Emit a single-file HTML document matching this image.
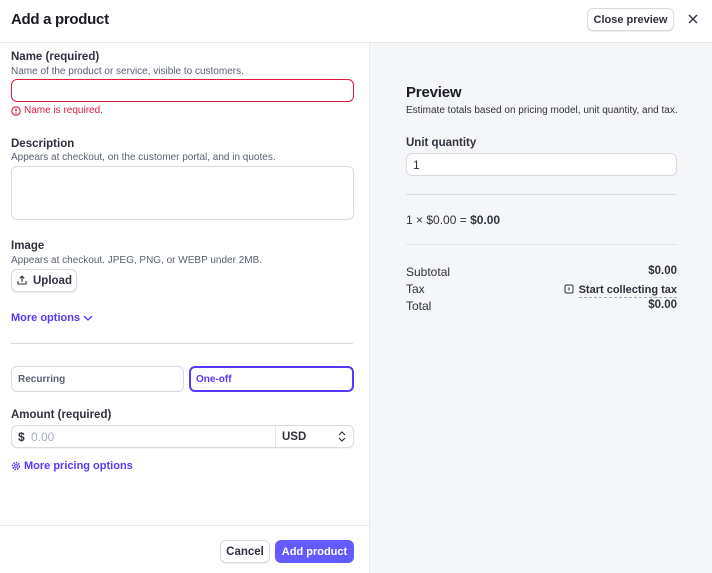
<!DOCTYPE html>
<html><head><style>
*{box-sizing:border-box;margin:0;padding:0}
body{width:712px;height:573px;overflow:hidden;background:#fff;font-family:"Liberation Sans",sans-serif;color:#1a1b25;position:relative}
.a{position:absolute;white-space:nowrap}
.lbl{font-size:11.5px;font-weight:bold;color:#30313d}
.help{font-size:10px;color:#596171}
.box{position:absolute;border:1px solid #d8dbe2;border-radius:6px;background:#fff}
.purple{color:#533afd}
</style></head><body>
<div class="a" style="left:11px;top:11px;font-size:15px;font-weight:bold;letter-spacing:-0.3px">Add a product</div>
<div class="box" style="left:587px;top:8px;width:87px;height:23px;font-size:11px;font-weight:bold;color:#30313d;text-align:center;line-height:22px;box-shadow:0 1px 1px rgba(0,0,0,.08)">Close preview</div>
<svg class="a" style="left:688px;top:14px" width="10" height="10" viewBox="0 0 10 10"><path d="M1 1L9 9M9 1L1 9" stroke="#30313d" stroke-width="1.3"/></svg>
<div class="a" style="left:0;top:42px;width:712px;height:1px;background:#e6e8ec"></div>
<div class="a" style="left:369px;top:43px;width:343px;height:530px;background:#f5f6f8;border-left:1px solid #e6e8ec"></div>

<div class="a lbl" style="left:11px;top:51px">Name (required)</div>
<div class="a help" style="left:11px;top:66px">Name of the product or service, visible to customers.</div>
<div class="box" style="left:11px;top:79px;width:343px;height:23px;border-color:#df1b41"></div>
<svg class="a" style="left:11px;top:106px" width="10" height="10" viewBox="0 0 10 10"><circle cx="5" cy="5" r="4.2" fill="none" stroke="#df1b41" stroke-width="1.1"/><path d="M5 2.6V5.6" stroke="#df1b41" stroke-width="1.2"/><circle cx="5" cy="7.3" r=".7" fill="#df1b41"/></svg>
<div class="a" style="left:24px;top:105px;font-size:10px;color:#df1b41">Name is required.</div>

<div class="a lbl" style="left:11px;top:138px">Description</div>
<div class="a help" style="left:11px;top:152px">Appears at checkout, on the customer portal, and in quotes.</div>
<div class="box" style="left:11px;top:166px;width:343px;height:54px"></div>

<div class="a lbl" style="left:11px;top:240px">Image</div>
<div class="a help" style="left:11px;top:255px">Appears at checkout. JPEG, PNG, or WEBP under 2MB.</div>
<div class="box" style="left:11px;top:269px;width:66px;height:23px;box-shadow:0 1px 1px rgba(0,0,0,.08)"></div>
<svg class="a" style="left:17px;top:275px" width="10" height="10" viewBox="0 0 10 10"><path d="M5 7V1.2M2.8 3.3L5 1.1 7.2 3.3M1 6v3h8V6" fill="none" stroke="#30313d" stroke-width="1.1"/></svg>
<div class="a" style="left:33px;top:275px;font-size:11.5px;font-weight:bold;color:#30313d">Upload</div>

<div class="a purple" style="left:11px;top:312px;font-size:11px;font-weight:bold">More options</div>
<svg class="a" style="left:83px;top:314px" width="10" height="8" viewBox="0 0 10 8"><path d="M1 2L5 6 9 2" fill="none" stroke="#533afd" stroke-width="1.3"/></svg>
<div class="a" style="left:11px;top:343px;width:342px;height:1px;background:#d8dbe2"></div>

<div class="box" style="left:11px;top:366px;width:173px;height:26px"></div>
<div class="a" style="left:18px;top:374px;font-size:10px;font-weight:bold;color:#596171">Recurring</div>
<div class="box" style="left:189px;top:366px;width:165px;height:26px;border:2px solid #533afd"></div>
<div class="a purple" style="left:196px;top:374px;font-size:10px;font-weight:bold">One-off</div>

<div class="a lbl" style="left:11px;top:409px">Amount (required)</div>
<div class="box" style="left:11px;top:425px;width:343px;height:23px;box-shadow:0 1px 1px rgba(0,0,0,.05)"></div>
<div class="a" style="left:275px;top:426px;width:1px;height:21px;background:#e6e8ec"></div>
<div class="a" style="left:18px;top:430px;font-size:12px;font-weight:bold;color:#30313d">$</div>
<div class="a" style="left:31px;top:430px;font-size:12px;color:#a3acba">0.00</div>
<div class="a" style="left:282px;top:431px;font-size:11.5px;font-weight:bold;color:#30313d">USD</div>
<svg class="a" style="left:338px;top:431px" width="8" height="11" viewBox="0 0 8 11"><path d="M1 4L4 1 7 4M1 7L4 10 7 7" fill="none" stroke="#30313d" stroke-width="1.2"/></svg>

<svg class="a" style="left:11px;top:461px" width="10" height="10" viewBox="0 0 10 10"><circle cx="5" cy="5" r="3.4" fill="none" stroke="#533afd" stroke-width="1.6" stroke-dasharray="1.6 1"/><circle cx="5" cy="5" r="1.4" fill="none" stroke="#533afd" stroke-width="1"/></svg>
<div class="a purple" style="left:24px;top:460px;font-size:11px;font-weight:bold">More pricing options</div>

<div class="a" style="left:0;top:525px;width:369px;height:1px;background:#e6e8ec"></div>
<div class="box" style="left:220px;top:540px;width:50px;height:23px;font-size:11.5px;font-weight:bold;color:#30313d;text-align:center;line-height:22px;box-shadow:0 1px 1px rgba(0,0,0,.08)">Cancel</div>
<div class="a" style="left:275px;top:540px;width:79px;height:23px;border-radius:6px;background:#635bff;color:#fff;font-size:11px;font-weight:bold;text-align:center;line-height:24px">Add product</div>

<div class="a" style="left:406px;top:84px;font-size:15px;font-weight:bold;letter-spacing:-0.2px">Preview</div>
<div class="a" style="left:406px;top:105px;font-size:10px;color:#30313d">Estimate totals based on pricing model, unit quantity, and tax.</div>
<div class="a lbl" style="left:406px;top:137px">Unit quantity</div>
<div class="box" style="left:406px;top:153px;width:271px;height:23px"></div>
<div class="a" style="left:413px;top:158px;font-size:12px;color:#30313d">1</div>
<div class="a" style="left:406px;top:194px;width:271px;height:1px;background:#d8dbe2"></div>
<div class="a" style="left:406px;top:213px;font-size:12px;color:#30313d">1 × $0.00 = <b>$0.00</b></div>
<div class="a" style="left:406px;top:244px;width:271px;height:1px;background:#e0e3e8"></div>
<div class="a" style="left:406px;top:265px;font-size:12px;color:#30313d">Subtotal</div>
<div class="a" style="left:406px;top:282px;font-size:12px;color:#30313d">Tax</div>
<div class="a" style="left:406px;top:299px;font-size:12px;color:#30313d">Total</div>
<div class="a" style="right:35px;top:265px;font-size:11.5px;font-weight:bold;color:#30313d">$0.00</div>
<div class="a" style="right:35px;top:299px;font-size:11.5px;font-weight:bold;color:#30313d">$0.00</div>
<svg class="a" style="left:564px;top:284px" width="10" height="10" viewBox="0 0 10 10"><rect x="1" y="1" width="8" height="8" rx="1.5" fill="none" stroke="#30313d" stroke-width="1"/><path d="M5 3.5V6.5" stroke="#30313d" stroke-width="1.1"/></svg>
<div class="a" style="right:35px;top:283px;font-size:11px;font-weight:bold;color:#30313d;border-bottom:1px dashed #a3acba;line-height:14px">Start collecting tax</div>
</body></html>
